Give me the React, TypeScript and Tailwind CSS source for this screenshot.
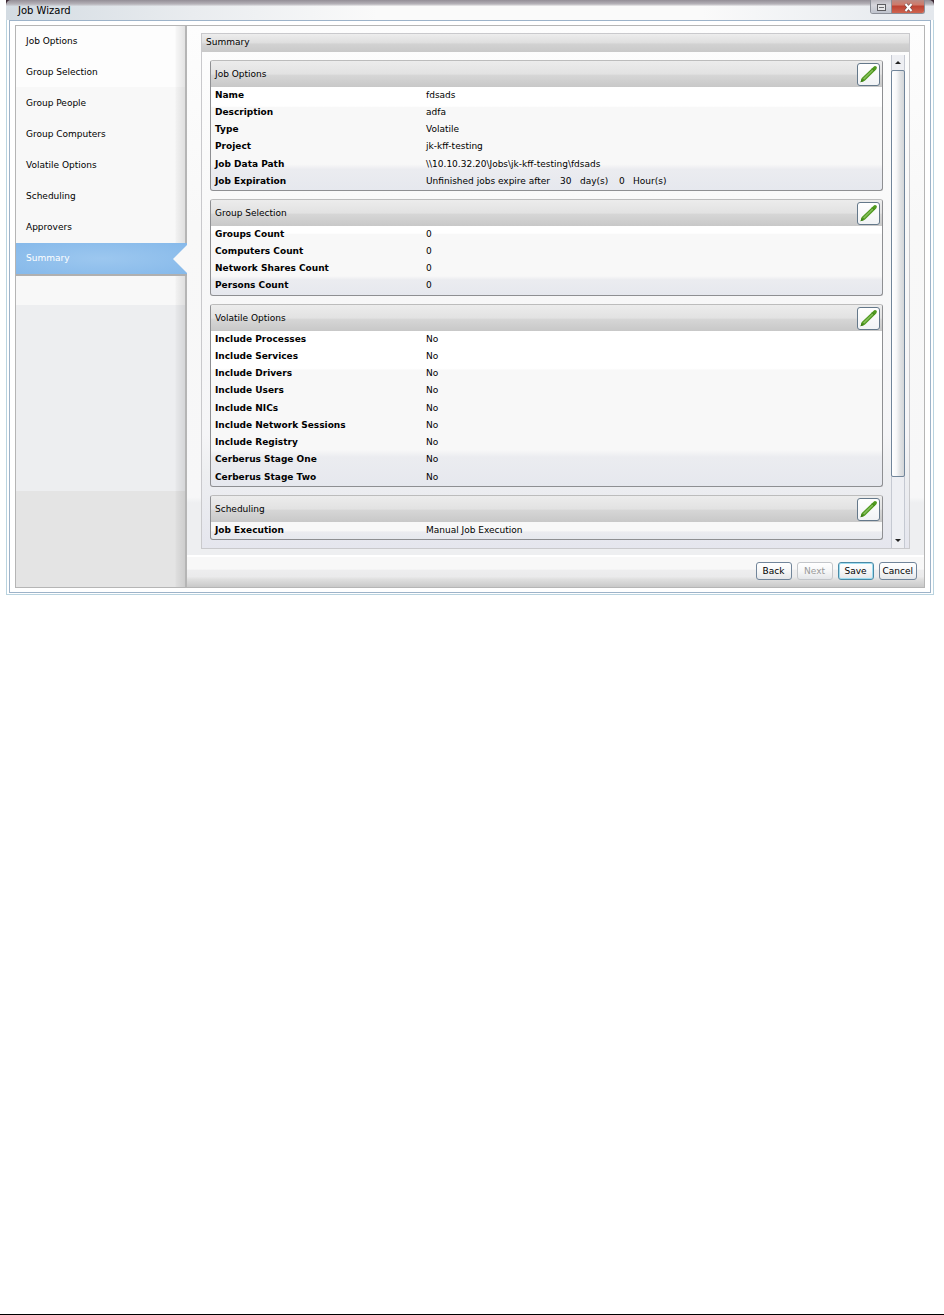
import { ReactNode } from "react";

type Row = [string, ReactNode];

const steps = [
  "Job Options",
  "Group Selection",
  "Group People",
  "Group Computers",
  "Volatile Options",
  "Scheduling",
  "Approvers",
  "Summary",
];

const expiration = (
  <span className="flex">
    <span className="w-[134px]">Unfinished jobs expire after</span>
    <span className="w-5">30</span>
    <span className="w-[39px]">day(s)</span>
    <span className="w-[14px]">0</span>
    <span>Hour(s)</span>
  </span>
);

const sections: { title: string; rows: Row[] }[] = [
  {
    title: "Job Options",
    rows: [
      ["Name", "fdsads"],
      ["Description", "adfa"],
      ["Type", "Volatile"],
      ["Project", "jk-kff-testing"],
      ["Job Data Path", "\\\\10.10.32.20\\Jobs\\jk-kff-testing\\fdsads"],
      ["Job Expiration", expiration],
    ],
  },
  {
    title: "Group Selection",
    rows: [
      ["Groups Count", "0"],
      ["Computers Count", "0"],
      ["Network Shares Count", "0"],
      ["Persons Count", "0"],
    ],
  },
  {
    title: "Volatile Options",
    rows: [
      ["Include Processes", "No"],
      ["Include Services", "No"],
      ["Include Drivers", "No"],
      ["Include Users", "No"],
      ["Include NICs", "No"],
      ["Include Network Sessions", "No"],
      ["Include Registry", "No"],
      ["Cerberus Stage One", "No"],
      ["Cerberus Stage Two", "No"],
    ],
  },
  { title: "Scheduling", rows: [["Job Execution", "Manual Job Execution"]] },
];

function Pencil() {
  return (
    <svg viewBox="0 0 20 20" className="size-5" aria-hidden="true">
      <path d="M1.6 18.2 L2.6 14.2 L14.4 3 Q15.8 1.4 17.4 2.6 Q18.6 3.8 17.2 5.4 L5.8 16.8 Z" fill="#4f9a1f" />
      <path d="M4 14.6 L13.4 5.4 L14.4 6.4 L5.4 15.6 Z" fill="#86bd5c" />
      <path d="M1.6 18.2 L2.4 15 L4.8 17.2 Z" fill="#3f7f1a" />
      <path d="M13 4.4 L15.6 7" stroke="#3f8418" strokeWidth="1" />
    </svg>
  );
}

function Section({ title, rows }: { title: string; rows: Row[] }) {
  return (
    <section className="overflow-hidden rounded-[3px] border border-[#8e8f92] border-t-[#bcbcbc] bg-[linear-gradient(#fff,#fff_35%,#f8f8f8_36%,#f8f8f8_80%,#ebecf0_84%,#e6e8ee)]">
      <header className="flex h-[26px] items-center justify-between bg-[linear-gradient(#ececec,#e2e2e2_50%,#d6d6d6_55%,#c8c8c8)] pl-1 pr-[2px]">
        <h2>{title}</h2>
        <button
          aria-label={`Edit ${title}`}
          className="flex size-[23px] items-center justify-center rounded-[3px] border border-[#64788a] bg-[linear-gradient(#fff,#f1f3f5)]"
        >
          <Pencil />
        </button>
      </header>
      <table className="w-full border-collapse text-left">
        <tbody>
          {rows.map(([label, value]) => (
            <tr key={label} className="h-[17px] nth-[4n]:h-[18px]">
              <th scope="row" className="w-[215px] pb-[2px] pl-1 font-bold">{label}</th>
              <td className="pb-[2px]">{value}</td>
            </tr>
          ))}
        </tbody>
      </table>
    </section>
  );
}

function FooterButton({ children, kind = "normal" }: { children: string; kind?: "normal" | "disabled" | "focus" }) {
  const look = {
    normal: "border-[#71859a]",
    disabled: "border-[#c3c6ca] text-[#9a9a9a]",
    focus: "border-[#4a8aa6] ring-1 ring-inset ring-[#9fdcf0]",
  }[kind];
  return (
    <button
      disabled={kind === "disabled"}
      className={`flex h-[18px] min-w-9 items-center justify-center rounded-[3px] border bg-[linear-gradient(#fff,#f6f7f8_50%,#e4e6e9)] px-[3px] pb-px ${look}`}
    >
      {children}
    </button>
  );
}

export default function App() {
  return (
    <div className="flex min-h-screen flex-col justify-between border-b border-black bg-white font-['DejaVu_Sans',sans-serif] text-[9px] leading-[12px] text-black">
      <main className="ml-[6px] mr-[10px] flex flex-col border-x border-b border-[#b9d3df] bg-white">
        <div className="-mx-px bg-[#3b2733]">
          <div className="flex h-5 items-start justify-between rounded-t-[5px] bg-[linear-gradient(#938e96,#b5b2b8_20%,transparent_32%),linear-gradient(90deg,#d3dbe2,#e9ecef_20%,#fafafa_40%,#fafafa_75%,#e4e8ed)] pl-3 pr-[9px]">
            <h1 className="pt-[5px] text-[10px]">Job Wizard</h1>
            <div className="flex h-[14px] overflow-hidden rounded-b-[3px] border border-t-0 border-[#8c8f98]">
              <button aria-label="Maximize" className="flex w-[21px] items-center justify-center border-r border-[#8c8f98] bg-[linear-gradient(#b9b6bd,#d6d6dc_40%,#bfc3cd)] pt-[2px]">
                <svg viewBox="0 0 11 9" className="h-[9px] w-[11px]" aria-hidden="true">
                  <rect x="1.5" y="1.5" width="8" height="6" fill="#e8e8ea" stroke="#5c5c60" />
                  <path d="M3 4.5 H8" stroke="#6c6c70" />
                </svg>
              </button>
              <button aria-label="Close" className="flex w-8 items-center justify-center bg-[linear-gradient(#b98a84,#cf7a6a_35%,#bf4433_50%,#cf6450)] pt-[2px]">
                <svg viewBox="0 0 11 9" className="h-[9px] w-[11px]" aria-hidden="true">
                  <path d="M2.5 1 L8.5 8 M8.5 1 L2.5 8" stroke="#6b4a4a" strokeWidth="3.4" />
                  <path d="M2.5 1 L8.5 8 M8.5 1 L2.5 8" stroke="#fff" strokeWidth="2" />
                </svg>
              </button>
            </div>
          </div>
        </div>

        <div className="mx-[2px] mb-px border border-[#9db3c9] bg-white px-[5px] py-1">
          <div className="flex border border-[#b5b5b5]">
            <nav className="w-[171px] shrink-0 border-r-2 border-[#b5b5b5] bg-[linear-gradient(90deg,transparent_94%,#00000008_95%,#0000001a),linear-gradient(#fdfdfd_61px,#f8f8f8_61px,#f8f8f8_279px,#edeef0_279px,#edeef0_465px,#e4e4e4_465px)]">
              <ul>
                {steps.map((step) =>
                  step === "Summary" ? (
                    <li key={step} className="relative -mr-[2px] border-b-2 border-[#b0b0b0] bg-[radial-gradient(ellipse_at_center,#9cc7ef,#86b9ea)]">
                      <a href="#summary" aria-current="step" className="flex h-[31px] items-center pb-[2px] pl-[10px] text-white">{step}</a>
                      <svg viewBox="0 0 14 28" className="absolute right-0 top-[2px] h-7 w-[14px]" aria-hidden="true">
                        <path d="M14 0 L0 14 L14 28 Z" fill="#f8f8f8" />
                      </svg>
                    </li>
                  ) : (
                    <li key={step}>
                      <a href="#step" className="flex h-[31px] items-center pb-[2px] pl-[10px]">{step}</a>
                    </li>
                  ),
                )}
              </ul>
            </nav>

            <div className="min-w-0 flex-1 bg-[linear-gradient(#fdfdfd,#f8f8f8_35%,#f7f7f8_84%,#eeeff1_85%,#eeeff1)]">
              <div className="px-[14px] pb-[6px] pt-[7px]">
                <div className="border border-[#c9c9cc] bg-[linear-gradient(#fdfdfd,#f8f8f8_40%,#f5f5f7_78%,#eeeff1_85%,#e5e6ee)]">
                  <h2 className="h-[18px] bg-[linear-gradient(#ededed,#dedede_50%,#d2d2d2_55%,#c9c9c9)] pl-1 pt-[2px]">Summary</h2>
                  <div className="flex h-[496px] gap-2 pl-2 pr-1">
                    <div className="flex min-w-0 flex-1 flex-col gap-2 overflow-hidden pt-2">
                      {sections.map((s) => (
                        <Section key={s.title} {...s} />
                      ))}
                    </div>
                    <div className="mt-[3px] flex w-[14px] shrink-0 flex-col border-x border-[#c5c9d2] bg-[#eeeff3]">
                      <button aria-label="Scroll up" className="flex h-[15px] items-center justify-center">
                        <svg viewBox="0 0 6 3" className="h-[3px] w-[6px]" aria-hidden="true"><path d="M3 0 L6 3 H0 Z" fill="#222" /></svg>
                      </button>
                      <div className="-mx-px h-[407px] rounded-[2px] border border-[#71859a] bg-[linear-gradient(90deg,#fff,#f8f8f9_35%,#e2e4e6_65%,#d3d6d9)]" />
                      <button aria-label="Scroll down" className="mt-auto flex h-[15px] items-center justify-center">
                        <svg viewBox="0 0 6 3" className="h-[3px] w-[6px]" aria-hidden="true"><path d="M0 0 H6 L3 3 Z" fill="#222" /></svg>
                      </button>
                    </div>
                  </div>
                </div>
              </div>
              <footer className="flex h-8 items-center justify-end gap-[5px] border-t-2 border-white bg-[linear-gradient(#f8f8f8_40%,#ededee_45%,#ebebec_65%,#dedede_75%,#c9c9c9)] pb-[2px] pr-[7px]">
                <FooterButton>Back</FooterButton>
                <FooterButton kind="disabled">Next</FooterButton>
                <FooterButton kind="focus">Save</FooterButton>
                <FooterButton>Cancel</FooterButton>
              </footer>
            </div>
          </div>
        </div>
      </main>
    </div>
  );
}
